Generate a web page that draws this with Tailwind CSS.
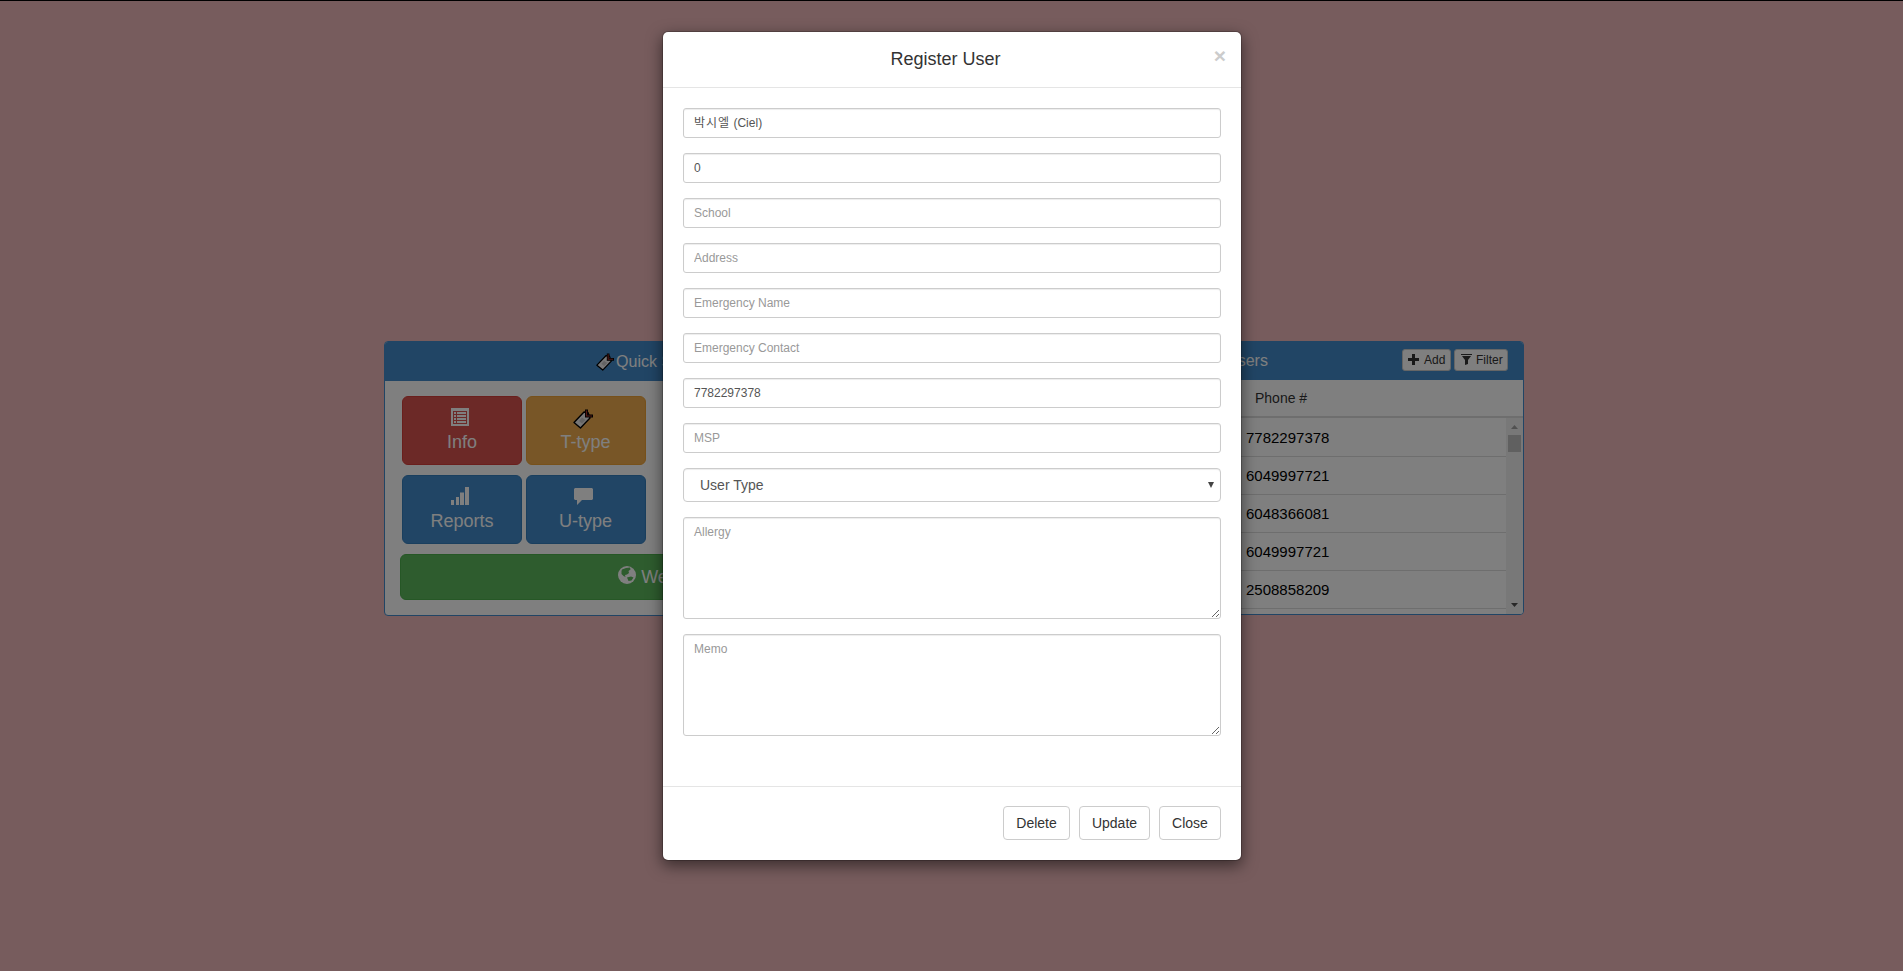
<!DOCTYPE html>
<html lang="en">
<head>
<meta charset="utf-8">
<title>Register User</title>
<script src="https://cdn.jsdelivr.net/npm/@tailwindcss/browser@4"></script>
</head>
<body class="h-[971px] overflow-hidden bg-[#eeb8ba] font-['Liberation_Sans','Noto_Sans_CJK_KR',sans-serif] text-sm leading-5 text-[#333]">
<svg class="hidden">
  <symbol id="tag" viewBox="0 0 20 20">
    <path d="M1 13.500 11 3 15 3.500 17 9 7.500 19Z" fill="#eee" stroke="#000" stroke-width="1.400" stroke-linejoin="round"/>
    <path d="M6 12 9 8.500l3.500 2.500L9 14.500z" fill="#c8c8c8"/>
    <path d="M13.500 0.500v6.500H20" fill="none" stroke="#000" stroke-width="3"/>
    <path d="M13.500 1.500v5.500H19" fill="none" stroke="#a8302a" stroke-width="1.200"/>
  </symbol>
</svg>
<main class="flex items-start gap-9 pl-[384px] pt-[341px]">
  <section class="flex h-[275px] w-[560px] shrink-0 flex-col overflow-hidden rounded border border-[#428bca] bg-white">
    <h3 class="flex h-[39px] shrink-0 items-center justify-center bg-[#428bca] pr-[3px] text-base text-white">
      <svg class="mr-[2px] size-[18px]"><use href="#tag"/></svg>Quick Shortcuts
    </h3>
    <div class="flex flex-col pl-[15px] pr-[15px] pt-[15px]">
      <div class="grid grid-cols-[120px_120px] gap-x-1 gap-y-[10px] pl-[2px] text-lg leading-6 text-white">
        <div class="flex h-[69px] flex-col items-center rounded-md border border-[#d43f3a] bg-[#d9534f] pt-[11px]">
          <svg class="mr-[4px] size-[18px]" viewBox="0 0 18 18" fill="#fff"><path fill-rule="evenodd" d="M0 0h18v18H0zM2 3v13h14V3z"/><path d="M3 4h2v2H3zM6 4h9v2H6zM3 7h2v2H3zM6 7h9v2H6zM3 10h2v2H3zM6 10h9v2H6zM3 13h2v2H3zM6 13h9v2H6z"/></svg>
          <span class="mt-[4px]">Info</span>
        </div>
        <div class="flex h-[69px] flex-col items-center rounded-md border border-[#eea236] bg-[#f0ad4e] pt-[11px]">
          <svg class="mr-[7px] mt-[1px] size-[20px]"><use href="#tag"/></svg>
          <span class="mr-[1px] mt-[1px]">T-type</span>
        </div>
        <div class="flex h-[69px] flex-col items-center rounded-md border border-[#357ebd] bg-[#428bca] pt-[11px]">
          <svg class="mr-[4px] size-[18px]" viewBox="0 0 18 18" fill="#fff"><path d="M0 13h3v5H0zM5 10h3v8H5zM9 5.500h4V18H9zM14 0h4v18h-4z"/></svg>
          <span class="mt-[4px]">Reports</span>
        </div>
        <div class="flex h-[69px] flex-col items-center rounded-md border border-[#357ebd] bg-[#428bca] pt-[11px]">
          <svg class="mr-[5px] h-[18px] w-[19px]" viewBox="0 0 19 18" fill="#fff"><path d="M1 1h17l1 1v10l-1 1H8l-5 5v-5H1l-1-1V2z"/></svg>
          <span class="mr-[1px] mt-[4px]">U-type</span>
        </div>
      </div>
      <div class="mt-[10px] flex h-[46px] items-center justify-center rounded-md border border-[#4cae4c] bg-[#5cb85c] pr-[4px] text-lg text-white">
        <svg class="mb-[4px] mr-[5px] size-[18px]" viewBox="0 0 18 18"><circle cx="9" cy="9" r="9" fill="#fff"/><path d="M4 3.500 8 2l4-.500.500 2-2 1.500.500 2-2 1.500-2 .500.500 2-2-1-2-2V5zM9 11.500l4-1 2.500 1-2 3-3 .500z" fill="#5cb85c"/></svg>Website
      </div>
    </div>
  </section>
  <section class="-ml-[10px] flex h-[274px] w-[554px] shrink-0 flex-col overflow-hidden rounded border border-[#428bca] bg-white">
    <div class="relative flex h-[38px] shrink-0 items-center justify-center bg-[#428bca] text-base text-white">
      <h3>Users</h3>
      <div class="absolute right-[15px] top-[7px] flex gap-[3px] text-xs text-[#333]">
        <div class="flex h-[22px] w-[49px] items-center rounded-[3px] border border-[#ccc] bg-white pl-[5px]">
          <svg class="mb-px mr-[5px] size-[11px]" viewBox="0 0 11 11" fill="#333"><path d="M4 0h3v4h4v3H7v4H4V7H0V4h4z"/></svg>Add
        </div>
        <div class="flex h-[22px] w-[54px] items-center rounded-[3px] border border-[#ccc] bg-white pl-[6px]">
          <svg class="mb-[2px] mr-[4px] size-[11px]" viewBox="0 0 11 11" fill="#333"><path d="M0 0h11v1H0zM1 2h9L7 6v4l-3 1V6z"/></svg>Filter
        </div>
      </div>
    </div>
    <div class="h-[38px] shrink-0 border-b-2 border-[#ddd] pl-[284px] pt-[8px]">Phone #</div>
    <div class="flex min-h-0 flex-1 text-[15px] text-black">
      <div class="flex-1">
        <div class="h-[39px] border-b border-[#ddd] pl-[275px] pt-[10px]">7782297378</div>
        <div class="h-[38px] border-b border-[#ddd] pl-[275px] pt-[9px]">6049997721</div>
        <div class="h-[38px] border-b border-[#ddd] pl-[275px] pt-[9px]">6048366081</div>
        <div class="h-[38px] border-b border-[#ddd] pl-[275px] pt-[9px]">6049997721</div>
        <div class="h-[38px] border-b border-[#ddd] pl-[275px] pt-[9px]">2508858209</div>
      </div>
      <div class="flex w-[17px] flex-col items-center bg-[#f1f1f1]">
        <svg class="mt-[7px] h-[4px] w-[7px] shrink-0" viewBox="0 0 7 4"><path d="M0 4 3.500 0 7 4z" fill="#a3a3a3"/></svg>
        <div class="mt-[6px] h-[17px] w-[13px] bg-[#c1c1c1]"></div>
        <svg class="mb-[7px] mt-auto h-[4px] w-[7px] shrink-0" viewBox="0 0 7 4"><path d="M0 0h7L3.500 4z" fill="#505050"/></svg>
      </div>
    </div>
  </section>
</main>

<div class="absolute inset-0 border-t border-black bg-black/50"></div>

<div class="absolute left-[662px] top-[31px] flex h-[830px] w-[580px] flex-col rounded-md border border-black/20 bg-white bg-clip-padding shadow-[0_5px_15px_rgba(0,0,0,0.5)]">
  <header class="relative flex h-[56px] shrink-0 justify-center border-b border-[#e5e5e5] pr-[13px] pt-[15px]">
    <h4 class="text-lg leading-[25px]">Register User</h4>
    <span class="absolute right-[15px] top-[13px] text-[21px] font-bold leading-[21px] text-[#ccc]">×</span>
  </header>
  <form class="flex flex-col gap-[15px] px-5 pt-5 text-xs text-[#555]">
    <div class="flex h-[30px] items-center rounded-[3px] border border-[#ccc] px-[10px] leading-[18px] shadow-[inset_0_1px_1px_rgba(0,0,0,0.075)]"><span class="pb-px tracking-[1px]">박시엘</span><span class="whitespace-pre pb-px"> (Ciel)</span></div>
    <input class="h-[30px] rounded-[3px] border border-[#ccc] px-[10px] leading-[18px] shadow-[inset_0_1px_1px_rgba(0,0,0,0.075)] placeholder:text-[#999]" value="0">
    <input class="h-[30px] rounded-[3px] border border-[#ccc] px-[10px] leading-[18px] shadow-[inset_0_1px_1px_rgba(0,0,0,0.075)] placeholder:text-[#999]" placeholder="School">
    <input class="h-[30px] rounded-[3px] border border-[#ccc] px-[10px] leading-[18px] shadow-[inset_0_1px_1px_rgba(0,0,0,0.075)] placeholder:text-[#999]" placeholder="Address">
    <input class="h-[30px] rounded-[3px] border border-[#ccc] px-[10px] leading-[18px] shadow-[inset_0_1px_1px_rgba(0,0,0,0.075)] placeholder:text-[#999]" placeholder="Emergency Name">
    <input class="h-[30px] rounded-[3px] border border-[#ccc] px-[10px] leading-[18px] shadow-[inset_0_1px_1px_rgba(0,0,0,0.075)] placeholder:text-[#999]" placeholder="Emergency Contact">
    <input class="h-[30px] rounded-[3px] border border-[#ccc] px-[10px] leading-[18px] shadow-[inset_0_1px_1px_rgba(0,0,0,0.075)] placeholder:text-[#999]" value="7782297378">
    <input class="h-[30px] rounded-[3px] border border-[#ccc] px-[10px] leading-[18px] shadow-[inset_0_1px_1px_rgba(0,0,0,0.075)] placeholder:text-[#999]" placeholder="MSP">
    <div class="flex h-[34px] items-center justify-between rounded border border-[#ccc] pl-4 pr-[6px] text-sm shadow-[inset_0_1px_1px_rgba(0,0,0,0.075)]">User Type
      <svg class="h-[6px] w-[6px]" viewBox="0 0 6 6"><path d="M0 0h6L3 6z" fill="#444"/></svg>
    </div>
    <textarea class="h-[102px] resize-y rounded-[3px] border border-[#ccc] px-[10px] py-[5px] leading-[18px] shadow-[inset_0_1px_1px_rgba(0,0,0,0.075)] placeholder:text-[#999]" placeholder="Allergy"></textarea>
    <textarea class="h-[102px] resize-y rounded-[3px] border border-[#ccc] px-[10px] py-[5px] leading-[18px] shadow-[inset_0_1px_1px_rgba(0,0,0,0.075)] placeholder:text-[#999]" placeholder="Memo"></textarea>
  </form>
  <footer class="mt-auto flex h-[74px] items-start justify-end border-t border-[#e5e5e5] pr-5 pt-[19px]">
    <button class="h-[34px] w-[67px] rounded border border-[#ccc]">Delete</button>
    <button class="ml-[9px] h-[34px] w-[71px] rounded border border-[#ccc]">Update</button>
    <button class="ml-[9px] h-[34px] w-[62px] rounded border border-[#ccc]">Close</button>
  </footer>
</div>
</body>
</html>
